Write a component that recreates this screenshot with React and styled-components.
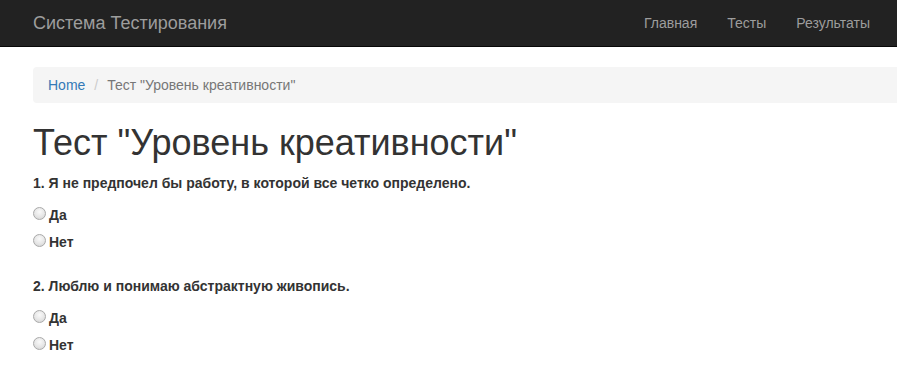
import React from "react";
import styled, { createGlobalStyle } from "styled-components";

const Global = createGlobalStyle`
  html, body { margin: 0; padding: 0; background: #fff; }
  body {
    font-family: "Liberation Sans", Arial, Helvetica, sans-serif;
    font-size: 14px;
    line-height: 1.42857;
    color: #333;
  }
  * { box-sizing: border-box; }
`;

const Navbar = styled.nav`
  height: 47px;
  background: #222;
  border-bottom: 1px solid #080808;
  display: flex;
  align-items: center;
  justify-content: space-between;
  padding: 0 12px 0 18px;
`;

const Brand = styled.a`
  padding: 0 15px;
  font-size: 18px;
  line-height: 20px;
  color: #9d9d9d;
  text-decoration: none;
`;

const NavList = styled.ul`
  list-style: none;
  margin: 0;
  padding: 0;
  display: flex;
`;

const NavLink = styled.a`
  display: block;
  padding: 13px 15px;
  line-height: 20px;
  color: #9d9d9d;
  text-decoration: none;
`;

const Main = styled.main`
  padding: 20px 0 0 33px;
`;

const Breadcrumb = styled.ol`
  list-style: none;
  margin: 0;
  padding: 8px 15px;
  height: 36px;
  background: #f5f5f5;
  border-radius: 4px 0 0 4px;
  display: flex;
  line-height: 20px;
`;

const Crumb = styled.li`
  color: ${(p) => (p.$active ? "#777" : "#337ab7")};
  &:not(:first-child)::before {
    content: "/\\00a0";
    padding: 0 5px 0 9px;
    color: #ccc;
  }
`;

const CrumbLink = styled.a`
  color: #337ab7;
  text-decoration: none;
`;

const Title = styled.h1`
  margin: 20px 0 10px;
  font-size: 36px;
  font-weight: 500;
  line-height: 1.1;
  color: #333;
`;

const Question = styled.fieldset`
  border: 0;
  margin: 0 0 24px;
  padding: 0;
  display: flex;
  flex-direction: column;
  gap: 7px;
`;

const QuestionText = styled.legend`
  padding: 0;
  font-weight: bold;
  line-height: 20px;
  margin-bottom: 5px;
  float: left;
  width: 100%;
`;

const Option = styled.label`
  display: flex;
  align-items: center;
  gap: 3px;
  font-weight: bold;
  line-height: 20px;
  cursor: pointer;
`;

const Radio = styled.input.attrs({ type: "radio" })`
  appearance: none;
  margin: 0;
  width: 13px;
  height: 13px;
  border-radius: 50%;
  border: 1px solid #a9a9a9;
  background: radial-gradient(circle at 50% 35%, #fafafa 0%, #e6e6e6 55%, #cfcfcf 100%);
  position: relative;
  top: -1px;
`;

const questions = [
  "1. Я не предпочел бы работу, в которой все четко определено.",
  "2. Люблю и понимаю абстрактную живопись.",
];

export default function App() {
  return (
    <>
      <Global />
      <Navbar>
        <Brand href="#">Система Тестирования</Brand>
        <NavList>
          <li><NavLink href="#">Главная</NavLink></li>
          <li><NavLink href="#">Тесты</NavLink></li>
          <li><NavLink href="#">Результаты</NavLink></li>
        </NavList>
      </Navbar>
      <Main>
        <Breadcrumb>
          <Crumb><CrumbLink href="#">Home</CrumbLink></Crumb>
          <Crumb $active>Тест "Уровень креативности"</Crumb>
        </Breadcrumb>
        <Title>Тест "Уровень креативности"</Title>
        {questions.map((q, i) => (
          <Question key={i}>
            <QuestionText>{q}</QuestionText>
            <Option><Radio name={`q${i}`} />Да</Option>
            <Option><Radio name={`q${i}`} />Нет</Option>
          </Question>
        ))}
      </Main>
    </>
  );
}
